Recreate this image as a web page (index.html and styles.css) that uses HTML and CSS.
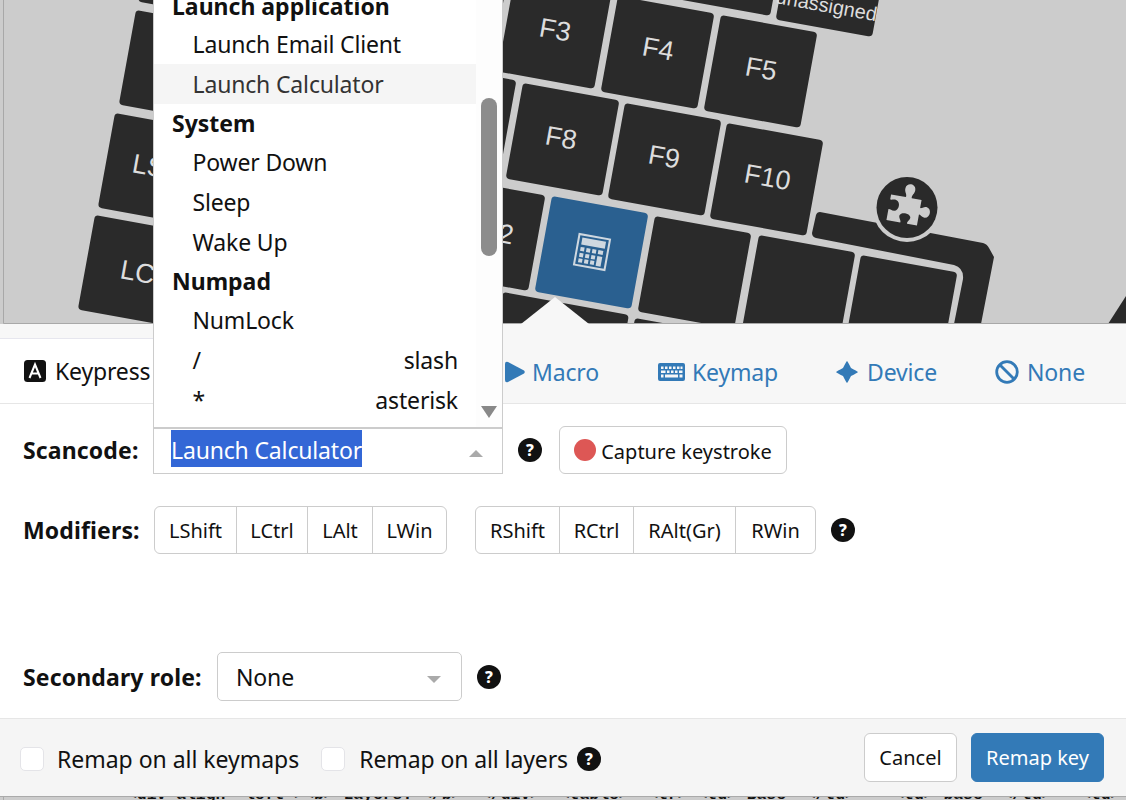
FILE: index.html
```html
<!DOCTYPE html>
<html lang="en">
<head>
<meta charset="utf-8">
<title>Remap key</title>
<link rel="stylesheet" href="styles.css">
</head>
<body>
<div class="page">
  <div class="scene">
    <svg class="board" width="1126" height="324" viewBox="0 0 1126 324" xmlns="http://www.w3.org/2000/svg">
      <g class="key-dark">
        <rect width="98" height="97" rx="4" transform="translate(691 -97) rotate(10.3)"/>
        <rect width="98" height="97" rx="4" transform="translate(793 -76) rotate(10.3)"/>
        <rect width="135" height="96" rx="4" transform="translate(155 -93) rotate(10.3)"/>
        <rect width="135" height="96" rx="4" transform="translate(136 10) rotate(10.3)"/>
        <rect width="135" height="96" rx="4" transform="translate(115 113) rotate(10.3)"/>
        <rect width="135" height="96" rx="4" transform="translate(95 215) rotate(10.3)"/>
        <rect width="98" height="97" rx="4" transform="translate(412 -44) rotate(10.3)"/>
        <rect width="98" height="97" rx="4" transform="translate(515 -24) rotate(10.3)"/>
        <rect width="98" height="97" rx="4" transform="translate(618 -4) rotate(10.3)"/>
        <rect width="98" height="97" rx="4" transform="translate(721 15) rotate(10.3)"/>
        <rect width="98" height="97" rx="4" transform="translate(420 63) rotate(10.3)"/>
        <rect width="98" height="97" rx="4" transform="translate(523 83) rotate(10.3)"/>
        <rect width="98" height="97" rx="4" transform="translate(625 103) rotate(10.3)"/>
        <rect width="98" height="97" rx="4" transform="translate(727 123) rotate(10.3)"/>
        <rect width="98" height="97" rx="4" transform="translate(449 178) rotate(10.3)"/>
        <rect width="98" height="97" rx="4" transform="translate(655 216) rotate(10.3)"/>
        <rect width="98" height="97" rx="4" transform="translate(759 235) rotate(10.3)"/>
        <rect width="128" height="96" rx="4" transform="translate(503 292) rotate(10.3)"/>
        <rect width="98" height="97" rx="4" transform="translate(635 318) rotate(10.3)"/>
        <path d="M820 212 L983 243 Q987 244 989 248 L994 257 L981 324 L954 324 L963 279 Q964 268 954 265 L816 238 Q812 237 812 233 L816 215 Q817 212 820 212 Z"/>
        <path d="M1108 324 L1126 296 L1126 324 Z"/>
      </g>
      <rect class="key-active" width="98" height="97" rx="4" transform="translate(552 196) rotate(10.3)"/>
      <rect class="key-dark-rect" width="98" height="97" rx="4" transform="translate(861 255) rotate(10.3)"/>

      <g class="key-label">
        <text transform="translate(775 3) rotate(10.3)" class="small">unassigned</text>
        <text transform="translate(131 172) rotate(10.3)">LShift</text>
        <text transform="translate(119 278) rotate(10.3)">LCtrl</text>
        <text transform="translate(538 36) rotate(10.3)">F3</text>
        <text transform="translate(641 55) rotate(10.3)">F4</text>
        <text transform="translate(744 75) rotate(10.3)">F5</text>
        <text transform="translate(544 144) rotate(10.3)">F8</text>
        <text transform="translate(647 163) rotate(10.3)">F9</text>
        <text transform="translate(743 182) rotate(10.3)">F10</text>
        <text transform="translate(466 236) rotate(10.3)">F12</text>
      </g>

      <g class="calc" transform="translate(592 252) rotate(10.3)">
        <rect class="calc-body" x="-15.5" y="-15.5" width="31" height="31"/>
        <rect class="calc-fill" x="-12" y="-12.5" width="24" height="7"/>
        <path class="calc-fill" d="M-12 -3h4v4h-4zM-6 -3h4v4h-4zM0 -3h4v4h-4zM6 -3h5v4h-5zM-12 3h4v4h-4zM-6 3h4v4h-4zM0 3h4v4h-4zM6 3h5v10h-5zM-12 8.5h4v4h-4zM-6 8.5h4v4h-4zM0 8.5h4v4h-4z"/>
      </g>

      <circle class="ring" cx="907" cy="207.5" r="34.5"/>
      <circle class="ring-inner" cx="907" cy="207.500" r="30.5"/>
      <path class="puzzle" transform="translate(907 207.500) rotate(10.3)" d="M-18 -10 H-3 C-2 -13 -5.500 -15 -5 -19 C-4.500 -25 4.500 -25 5 -19 C5.500 -15 2 -13 3 -10 H13 V-2 C14 -1 16 -4 19 -4 C25 -3.500 25 6.500 19 7 C16 7 14 4 13 5 V16 H3 C2 14 5.500 12 5 9 C4 5 -5 5 -6 9 C-6.500 12 -3 14 -4 16 H-18 V5 C-17 4 -15 6 -12 5.500 C-7 4.500 -7 -4.500 -12 -5.500 C-15 -6 -17 -4 -18 -5 Z"/>
      <path class="frame" d="M3.5 0 V323.5 H1126"/>
    </svg>
    <span class="pointer"></span>
  </div>

  <div class="modal">
    <nav class="tabs">
      <div class="tab tab-active">
        <svg class="tab-icon" viewBox="0 0 22 22" width="22" height="22" xmlns="http://www.w3.org/2000/svg"><rect width="22" height="22" rx="3.5" fill="#111"/><path d="M5.500 18 L11 4.500 L16.500 18 M7.400 13.500 H14.600" fill="none" stroke="#fff" stroke-width="2"/></svg>
        <span>Keypress</span>
      </div>
      <div class="tab tab-macro">
        <svg class="tab-icon" viewBox="0 0 20 22" width="20" height="22" xmlns="http://www.w3.org/2000/svg"><path d="M0 3 Q0 0 3 1 L19 9.5 Q20.500 11 19 12.500 L3 21 Q0 22 0 19 Z" fill="#337ab7"/></svg>
        <span>Macro</span>
      </div>
      <div class="tab tab-keymap">
        <svg class="tab-icon" viewBox="0 0 27 20" width="27" height="20" xmlns="http://www.w3.org/2000/svg"><path fill-rule="evenodd" fill="#337ab7" d="M2 1h23q2 0 2 2v14q0 2-2 2H2q-2 0-2-2V3q0-2 2-2zM3 4.500v2.500h2.500V4.500zM7 4.500v2.500h2.500V4.500zM11 4.500v2.500h2.500V4.500zM15 4.500v2.500h2.500V4.500zM19 4.500v2.500h2.500V4.500zM22.500 4.500v2.500H24.500V4.500zM3 8.500v2.500h4.500V8.500zM9 8.500v2.500h2.500V8.500zM13 8.500v2.500h2.500V8.500zM17 8.500v2.500h2.500V8.500zM21 8.500v2.500H24.500V8.500zM3 12.500v3h2.500v-3zM7 12.500v3h13v-3zM21.500 12.500v3H24.500v-3z"/></svg>
        <span>Keymap</span>
      </div>
      <div class="tab tab-device">
        <svg class="tab-icon" viewBox="0 0 22 22" width="22" height="22" xmlns="http://www.w3.org/2000/svg"><path d="M11 0 Q12 1 15 7 Q21 10 22 11 Q21 12 15 15 Q12 21 11 22 Q10 21 7 15 Q1 12 0 11 Q1 10 7 7 Q10 1 11 0 Z" fill="#337ab7"/></svg>
        <span>Device</span>
      </div>
      <div class="tab tab-none">
        <svg class="tab-icon" viewBox="0 0 24 24" width="24" height="24" xmlns="http://www.w3.org/2000/svg"><circle cx="12" cy="12" r="10.300" fill="none" stroke="#337ab7" stroke-width="2.800"/><path d="M5 5 L19 19" stroke="#337ab7" stroke-width="2.800"/></svg>
        <span>None</span>
      </div>
    </nav>

    <section class="form">
      <div class="row row-scancode">
        <b class="label label-scancode">Scancode:</b>
        <div class="select-open">
          <span class="selected-text">Launch Calculator</span>
          <span class="caret caret-up"></span>
        </div>
        <span class="help help-scancode">?</span>
        <button class="btn btn-capture"><span class="rec"></span><span class="capture-text">Capture keystroke</span></button>
      </div>
      <div class="row row-mods">
        <b class="label label-mods">Modifiers:</b>
        <div class="group">
          <span class="mod mod-a">LShift</span><span class="mod mod-b">LCtrl</span><span class="mod mod-c">LAlt</span><span class="mod mod-d">LWin</span>
        </div>
        <div class="group group-right">
          <span class="mod mod-e">RShift</span><span class="mod mod-f">RCtrl</span><span class="mod mod-g">RAlt(Gr)</span><span class="mod mod-h">RWin</span>
        </div>
        <span class="help help-mods">?</span>
      </div>
      <div class="row row-secondary">
        <b class="label label-secondary">Secondary role:</b>
        <div class="select-closed">
          <span>None</span>
          <span class="caret caret-down"></span>
        </div>
        <span class="help help-secondary">?</span>
      </div>
    </section>

    <footer class="footer">
      <label class="check check-a"><span class="box"></span>Remap on all keymaps</label>
      <label class="check check-b"><span class="box"></span>Remap on all layers</label>
      <span class="help help-footer">?</span>
      <div class="actions">
        <button class="btn btn-cancel">Cancel</button>
        <button class="btn btn-primary">Remap key</button>
      </div>
    </footer>
  </div>

  <div class="under">
    <code>&lt;div align="left"&gt;&lt;b&gt; Layers: &lt;/b&gt;  &lt;/div&gt;  &lt;table&gt;  &lt;tr&gt; &lt;td&gt; Base  &lt;/td&gt;    &lt;td&gt; base  &lt;/td&gt;   &lt;td&gt; ab  </code>
  </div>

  <div class="menu">
    <ul class="options">
      <li class="opt-group opt-first">Launch application</li>
      <li class="opt">Launch Email Client</li>
      <li class="opt opt-hover">Launch Calculator</li>
      <li class="opt-group">System</li>
      <li class="opt">Power Down</li>
      <li class="opt">Sleep</li>
      <li class="opt">Wake Up</li>
      <li class="opt-group">Numpad</li>
      <li class="opt">NumLock</li>
      <li class="opt opt-split"><span>/</span><span>slash</span></li>
      <li class="opt opt-split"><span>*</span><span>asterisk</span></li>
    </ul>
    <div class="scrollbar">
      <span class="thumb"></span>
      <span class="scroll-arrow"></span>
    </div>
  </div>
</div>
</body>
</html>
```
FILE: styles.css
```css
* { box-sizing: border-box; }
html, body { margin: 0; height: 100%; overflow: hidden; }
body {
  background: #ccc;
  color: #111;
  font-family: "Noto Sans", "Open Sans", sans-serif;
  font-size: 23px;
  letter-spacing: -0.16px;
}
.page { position: relative; width: 1126px; height: 800px; overflow: hidden; }

/* keyboard canvas */
.scene { position: relative; height: 324px; background: #ccc; }
.board { display: block; }
.key-dark rect, .key-dark path, .key-dark-rect { fill: #2a2a2a; }
.key-active { fill: #2a6090; }
.key-label text { fill: #ddd; font-family: "Liberation Sans", Arial, sans-serif; font-size: 27px; letter-spacing: 0; }
.key-label text.small { font-size: 20px; }
.calc-body { fill: none; stroke: #cfd8e0; stroke-width: 2; }
.calc-fill { fill: #cfd8e0; }
.ring { fill: #ccc; }
.ring-inner { fill: #2a2a2a; }
.puzzle { fill: #ccc; }
.frame { fill: none; stroke: #a8a8a8; stroke-width: 1; }
.pointer {
  position: absolute; left: 521px; top: 297px;
  border-left: 34px solid transparent; border-right: 34px solid transparent;
  border-bottom: 27px solid #f7f7f7;
}

/* modal */
.modal { background: #fff; }
.tabs {
  display: flex; align-items: stretch; height: 80px;
  background: #f7f7f7; border-bottom: 1px solid #e6e6e6;
}
.tab { display: flex; align-items: center; gap: 9px; color: #337ab7; padding-top: 16px; }
.tab-active {
  width: 153px; margin-top: 14px; margin-bottom: -1px; padding: 0 0 0 24px;
  background: #fff; color: #111; border-top: 1px solid #e6e6ee; border-bottom: 1px solid #e6e6e6;
}
.tab-macro { margin-left: 352px; gap: 7px; }
.tab-keymap { margin-left: 59px; gap: 7px; }
.tab-device { margin-left: 58px; }
.tab-none { margin-left: 58px; gap: 8px; }
.tab-icon { flex: none; display: block; }

.form { height: 314px; padding: 22px 0 0 23px; }
.row { display: flex; align-items: center; height: 48px; }
.row-mods { margin-top: 32px; }
.row-secondary { margin-top: 98px; height: 49px; }
.label { font-weight: 700; letter-spacing: 0.14px; }
.label-scancode { width: 130px; }
.label-mods { width: 131px; }
.label-secondary { width: 194px; }

.select-open {
  position: relative; display: flex; align-items: center; width: 350px; height: 46px; margin-top: 2px;
  padding-left: 17px; border: 1px solid #ccc; background: #fff;
}
.selected-text { background: #3367d6; color: #fff; height: 37px; line-height: 40px; margin-top: -5px; }
.caret { position: absolute; border-left: 7px solid transparent; border-right: 7px solid transparent; }
.caret-up { right: 19px; top: 21px; border-bottom: 7px solid #aaa; }
.caret-down { right: 20px; top: 23px; border-top: 7px solid #aaa; }
.help {
  display: flex; align-items: center; justify-content: center; flex: none;
  width: 24px; height: 24px; border-radius: 50%;
  background: #111; color: #fff; font-size: 16px; font-weight: 800; letter-spacing: 0;
}
.help-scancode { margin-left: 15px; }
.help-mods { margin-left: 15px; }
.help-secondary { margin-left: 15px; }
.help-footer { margin-left: 9px; margin-top: 3px; }

.btn {
  font: inherit; letter-spacing: 0; color: #111; background: #fff; border: 1px solid #ccc;
  border-radius: 6px; height: 48px; padding: 0; display: inline-flex; align-items: center; justify-content: center;
}
.btn-capture { width: 228px; margin-left: 17px; gap: 5px; font-size: 20px; }
.capture-text { padding-top: 2px; }
.rec { width: 22px; height: 22px; border-radius: 50%; background: #dd5755; }

.group { display: flex; height: 48px; border: 1px solid #ccc; border-radius: 6px; background: #fff; font-size: 20px; letter-spacing: 0; }
.group-right { margin-left: 28px; }
.mod { display: flex; align-items: center; justify-content: center; border-right: 1px solid #ccc; }
.mod:last-child { border-right: 0; }
.mod-a { width: 82px; }
.mod-b { width: 71px; }
.mod-c { width: 65px; }
.mod-d { width: 73px; }
.mod-e { width: 84px; }
.mod-f { width: 74px; }
.mod-g { width: 102px; }
.mod-h { width: 79px; }

.select-closed {
  position: relative; display: flex; align-items: center; width: 245px; height: 49px;
  padding-left: 18px; border: 1px solid #ccc; border-radius: 5px; background: #fff;
}

.footer {
  display: flex; align-items: center; height: 78px; padding: 0 22px 0 20px;
  background: #f5f5f5; border-top: 1px solid #e6e6e6;
}
.check { display: flex; align-items: center; gap: 14px; margin-top: 3px; letter-spacing: -0.1px; }
.check-a { gap: 13px; letter-spacing: -0.03px; }
.check-b { margin-left: 22px; }
.box { width: 24px; height: 24px; background: #fff; border: 1px solid #e4e4e8; border-radius: 5px; }
.actions { display: flex; gap: 14px; margin-left: auto; }
.btn-cancel { width: 93px; height: 49px; font-size: 20px; }
.btn-primary { width: 133px; height: 49px; background: #337ab7; border-color: #337ab7; color: #fff; font-size: 20px; }

.under { position: relative; height: 4px; overflow: hidden; background: #ccc; border-top: 1px solid #aaa; }
.under::before { content: ""; position: absolute; left: 3px; top: 0; width: 1px; height: 4px; background: #aaa; }
.under code {
  position: absolute; left: 127px; top: -12px; white-space: pre; letter-spacing: 0;
  font-family: "Liberation Mono", monospace; font-size: 16.4px; font-weight: 700; color: #111;
}

/* open dropdown */
.menu {
  position: absolute; left: 153px; top: 0; width: 350px; height: 428px; display: flex;
  background: #fff; border: 1px solid #ccc; border-top: 0; overflow: hidden;
}
.options { list-style: none; margin: -14px 0 0; padding: 0; width: 322px; flex: none; }
.opt-group { height: 38px; line-height: 39px; padding-left: 18px; font-weight: 700; letter-spacing: 0; }
.opt-first { line-height: 40px; }
.opt { height: 40px; line-height: 40px; padding: 0 18px 0 38.5px; }
.opt-hover { background: #f5f5f5; color: #333; line-height: 41px; }
.opt-split { display: flex; justify-content: space-between; }
.scrollbar { position: relative; flex: 1; background: #fdfdfd; }
.thumb { position: absolute; left: 5px; top: 98px; width: 16px; height: 158px; border-radius: 8px; background: #8c8c8c; }
.scroll-arrow {
  position: absolute; left: 5px; top: 406px;
  border-left: 8px solid transparent; border-right: 8px solid transparent; border-top: 12px solid #888;
}
```
